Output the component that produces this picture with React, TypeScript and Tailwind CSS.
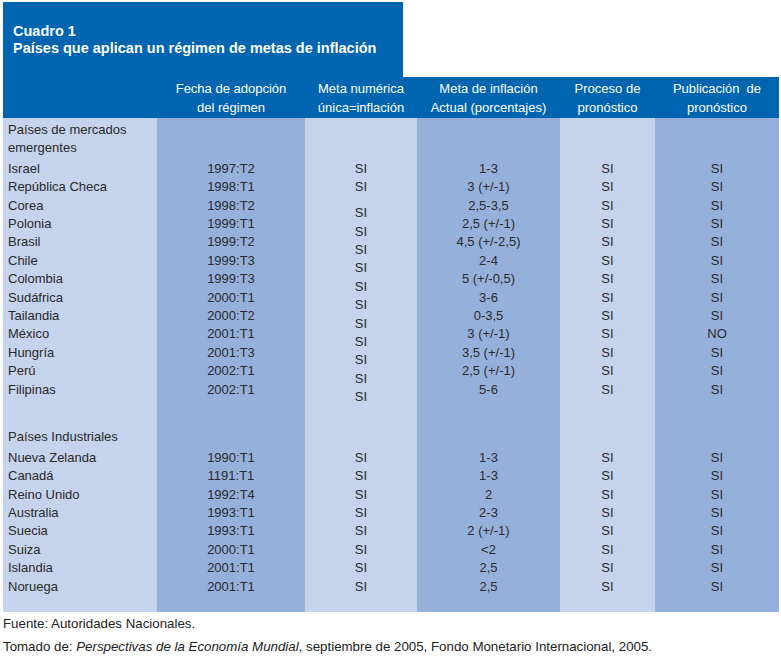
import React from "react";

const LIGHT = "bg-[#c5d3ec]";
const DARK = "bg-[#96b0dc]";

type Col = {
  w: string;
  bg: string;
  head: string[];
  align: "left" | "center";
  g1: string[];
  g2: string[];
  offset?: boolean;
};

const names1 = [
  "Israel",
  "República Checa",
  "Corea",
  "Polonia",
  "Brasil",
  "Chile",
  "Colombia",
  "Sudáfrica",
  "Tailandia",
  "México",
  "Hungría",
  "Perú",
  "Filipinas",
];
const names2 = [
  "Nueva Zelanda",
  "Canadá",
  "Reino Unido",
  "Australia",
  "Suecia",
  "Suiza",
  "Islandia",
  "Noruega",
];

const si13 = Array(13).fill("SI");
const si8 = Array(8).fill("SI");

const cols: Col[] = [
  { w: "w-[154px]", bg: LIGHT, head: ["", ""], align: "left", g1: names1, g2: names2 },
  {
    w: "w-[148px]",
    bg: DARK,
    head: ["Fecha de adopción", "del régimen"],
    align: "center",
    g1: [
      "1997:T2",
      "1998:T1",
      "1998:T2",
      "1999:T1",
      "1999:T2",
      "1999:T3",
      "1999:T3",
      "2000:T1",
      "2000:T2",
      "2001:T1",
      "2001:T3",
      "2002:T1",
      "2002:T1",
    ],
    g2: ["1990:T1", "1191:T1", "1992:T4", "1993:T1", "1993:T1", "2000:T1", "2001:T1", "2001:T1"],
  },
  {
    w: "w-[112px]",
    bg: LIGHT,
    head: ["Meta numérica", "única=inflación"],
    align: "center",
    g1: si13,
    g2: si8,
    offset: true,
  },
  {
    w: "w-[143px]",
    bg: DARK,
    head: ["Meta de inflación", "Actual (porcentajes)"],
    align: "center",
    g1: [
      "1-3",
      "3 (+/-1)",
      "2,5-3,5",
      "2,5 (+/-1)",
      "4,5 (+/-2,5)",
      "2-4",
      "5 (+/-0,5)",
      "3-6",
      "0-3,5",
      "3 (+/-1)",
      "3,5 (+/-1)",
      "2,5 (+/-1)",
      "5-6",
    ],
    g2: ["1-3", "1-3", "2", "2-3", "2 (+/-1)", "<2", "2,5", "2,5"],
  },
  {
    w: "w-[95px]",
    bg: LIGHT,
    head: ["Proceso de", "pronóstico"],
    align: "center",
    g1: si13,
    g2: si8,
  },
  {
    w: "w-[124px]",
    bg: DARK,
    head: ["Publicación  de", "pronóstico"],
    align: "center",
    g1: [...Array(9).fill("SI"), "NO", "SI", "SI", "SI"],
    g2: si8,
  },
];

export default function App() {
  return (
    <div
      className="w-[781px] h-[656px] bg-white text-[#2a2a2a]"
      style={{ fontFamily: '"Liberation Sans", Arial, sans-serif' }}
    >
      <div className="pt-[2px] pl-[3px]">
        {/* Title box */}
        <div className="w-[400px] h-[75px] bg-[#0065b1] text-white font-bold text-[14.5px] leading-[17px] pl-[10px] pt-[21px]">
          <div>Cuadro 1</div>
          <div>Países que aplican un régimen de metas de inflación</div>
        </div>
        {/* Header band */}
        <div className="flex w-[776px] h-[41px] bg-[#0065b1] text-white text-[13px] leading-[19px]">
          {cols.map((c, i) => (
            <div key={i} className={`${c.w} flex flex-col items-center pt-[2px] whitespace-pre`}>
              <div>{c.head[0]}</div>
              <div>{c.head[1]}</div>
            </div>
          ))}
        </div>
        {/* Body */}
        <div className="flex w-[776px] h-[494px] text-[13px] leading-[18.4px]">
          {cols.map((c, i) => (
            <div
              key={i}
              className={`${c.w} ${c.bg} flex flex-col pt-[3px] ${
                c.align === "left" ? "items-start pl-[5px]" : "items-center"
              }`}
            >
              <div className="h-[36.8px]">
                {i === 0 ? (
                  <>
                    <div>Países de mercados</div>
                    <div>emergentes</div>
                  </>
                ) : null}
              </div>
              <div className="h-[2px]" />
              <div className="h-[239.2px] flex flex-col">
                {c.g1.map((t, j) => (
                  <div
                    key={j}
                    className={`${c.align === "left" ? "text-left" : "text-center"} ${
                      c.offset && j === 2 ? "mt-[7.5px]" : ""
                    }`}
                  >
                    {t}
                  </div>
                ))}
              </div>
              <div className="h-[28.8px]" />
              <div className="h-[18.4px]">{i === 0 ? "Países Industriales" : ""}</div>
              <div className="h-[2.6px]" />
              <div className="flex flex-col">
                {c.g2.map((t, j) => (
                  <div key={j} className={c.align === "left" ? "text-left" : "text-center"}>
                    {t}
                  </div>
                ))}
              </div>
            </div>
          ))}
        </div>
      </div>
      {/* Footer */}
      <div className="pl-[3px] text-[13.3px] leading-[23px] text-[#222]">
        <div>Fuente: Autoridades Nacionales.</div>
        <div>
          Tomado de: <i>Perspectivas de la Economía Mundial</i>, septiembre de 2005, Fondo Monetario
          Internacional, 2005.
        </div>
      </div>
    </div>
  );
}
